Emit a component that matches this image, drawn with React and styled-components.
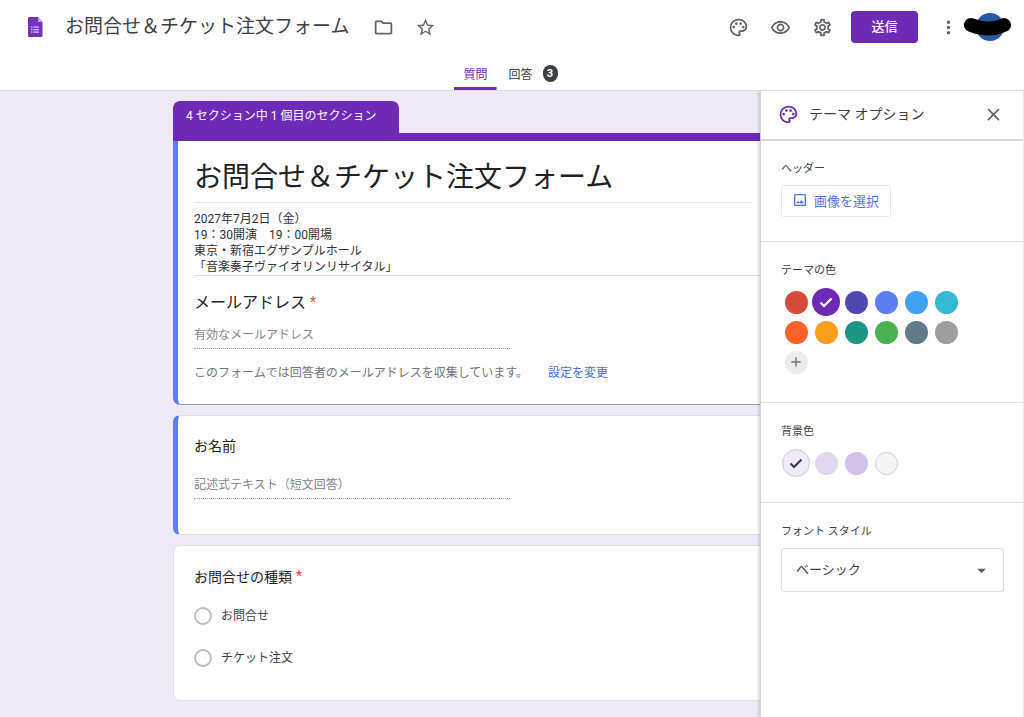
import React from "react";
import styled, { createGlobalStyle, css } from "styled-components";
import {
  MdAdd,
  MdArrowDropDown,
  MdClose,
  MdMoreVert,
  MdOutlineFolder,
  MdOutlineImage,
  MdOutlinePalette,
  MdOutlineRemoveRedEye,
  MdOutlineSettings,
  MdStarBorder,
} from "react-icons/md";

const purple = "#6f2ab5";
const blue = "#5c7ef0";
const line = "#dfdfe2";

const GlobalStyle = createGlobalStyle`
  *, *::before, *::after { box-sizing: border-box; }
  body {
    margin: 0;
    background: #fff;
    color: #202124;
    font-family: Roboto, "Noto Sans CJK JP", sans-serif;
    font-size: 12px;
  }
  button, input, select { font: inherit; color: inherit; }
  button { cursor: pointer; }
  h1, h2, h3, p, fieldset { margin: 0; padding: 0; border: 0; font-weight: 400; }
`;

const Page = styled.div`
  min-height: 100vh;
  display: flex;
  flex-direction: column;
`;

const TopBar = styled.header`
  border-bottom: 1px solid ${line};
`;

const Toolbar = styled.div`
  display: flex;
  align-items: center;
  height: 54px;
  padding: 0 12px 0 28px;
`;

const DocTitle = styled.h1`
  margin: 0 13px 0 22px;
  font-size: 19px;
  line-height: 28px;
  color: #3c4043;
  white-space: nowrap;
`;

const Spacer = styled.div`
  flex: 1;
`;

const IconButton = styled.button`
  display: flex;
  align-items: center;
  justify-content: center;
  width: ${(p) => p.$width || 42}px;
  height: 42px;
  padding: 0;
  border: 0;
  background: none;
  color: #5f6368;
  font-size: 21px;
`;

const SendButton = styled.button`
  width: 67px;
  height: 32px;
  margin: 0 15px 0 8px;
  padding: 0 0 3px;
  border: 0;
  border-radius: 4px;
  background: ${purple};
  color: #fff;
  font-size: 13px;
  font-weight: 500;
`;

const AvatarButton = styled.button`
  display: flex;
  padding: 0;
  border: 0;
  background: none;
`;

const Tabs = styled.nav`
  display: flex;
  justify-content: center;
  height: 36px;
  padding-top: 3px;
`;

const Tab = styled.button`
  display: flex;
  align-items: center;
  gap: 10px;
  padding: 2px ${(p) => (p.$active ? 9 : 12)}px 0;
  border: 0;
  background: none;
  color: #3c4043;
  border-bottom: 3px solid transparent;
  ${(p) =>
    p.$active &&
    css`
      color: ${purple};
      background: linear-gradient(${purple}, ${purple}) bottom / 100% 3px no-repeat border-box;
      border-radius: 2px 2px 0 0;
    `}
`;

const Badge = styled.span`
  width: 15px;
  height: 17px;
  border-radius: 8px;
  background: #3c4043;
  color: #fff;
  font-size: 11px;
  font-weight: 700;
  line-height: 17px;
  text-align: center;
`;

const Workspace = styled.div`
  position: relative;
  flex: 1;
  background: #f0eaf8;
`;

const FormColumn = styled.main`
  display: flex;
  flex-direction: column;
  gap: 10px;
  max-width: 678px;
  margin: 0 auto;
  padding: 10px 0 16px;
`;

const SectionTab = styled.div`
  width: fit-content;
  min-width: 226px;
  height: 32px;
  padding: 0 13px;
  border-radius: 7px 7px 0 0;
  background: ${purple};
  color: #fff;
  font-size: 12px;
  line-height: 30px;
`;

const Card = styled.section`
  overflow: hidden;
  padding: ${(p) => p.$padding};
  border: 1px solid ${line};
  border-left: ${(p) => (p.$marked ? `5px solid ${blue}` : `1px solid ${line}`)};
  border-radius: 7px;
  background: #fff;
`;

const HeadCard = styled(Card)`
  border-top: 0;
  border-bottom-color: #a09ea8;
  border-radius: 0 0 7px 7px;
`;

const SectionBar = styled.div`
  height: 8px;
  background: ${purple};
`;

const FormTitle = styled.h2`
  width: 558px;
  max-width: 100%;
  height: 49px;
  border-bottom: 1px solid #e6e6e8;
  font-size: 28px;
  line-height: 48px;
`;

const Description = styled.p`
  padding-top: 8px;
  margin-bottom: 14px;
  border-bottom: 1px solid ${line};
  color: #303134;
  font-size: 12px;
  line-height: 16px;
  white-space: pre-line;
`;

const Question = styled.label`
  display: block;
  font-size: ${(p) => (p.$large ? 16 : 14)}px;
  line-height: 24px;
`;

const Required = styled.span`
  margin-left: 4px;
  color: #d9483b;
  vertical-align: 1px;
  font-size: 14px;
`;

const Answer = styled.input`
  display: block;
  width: 316px;
  height: 28px;
  margin-top: ${(p) => p.$top}px;
  padding: 0;
  border: 0;
  border-bottom: 1px dotted #9a9da1;
  border-radius: 0;
  background: none;
  font-size: 12px;
  &::placeholder { color: #80868b; opacity: 1; }
`;

const Note = styled.p`
  display: flex;
  gap: 20px;
  margin-top: 14px;
  color: #70757a;
  font-size: 12px;
  line-height: 20px;
`;

const Link = styled.a`
  color: #3f6fe0;
  text-decoration: none;
`;

const Options = styled.fieldset`
  display: flex;
  flex-direction: column;
  gap: 22px;
  margin-top: 17px;
  min-width: 0;
`;

const Option = styled.label`
  display: flex;
  align-items: center;
  gap: 9px;
  line-height: 20px;
  color: #3c4043;
`;

const Radio = styled.input`
  appearance: none;
  width: 18px;
  height: 18px;
  margin: 0;
  border: 2px solid #bdbdbd;
  border-radius: 50%;
`;

/* The theme panel slides over the right side of the form. */
const Panel = styled.aside`
  position: absolute;
  top: 0;
  right: 0;
  bottom: 0;
  width: 264px;
  border-left: 1px solid #d5d3da;
  border-right: 1px solid #ececee;
  background: #fff;
  box-shadow: -1px 0 4px rgba(0, 0, 0, 0.2);
  clip-path: inset(0 0 0 -8px);
`;

const PanelHeader = styled.div`
  display: flex;
  align-items: center;
  height: 50px;
  padding: 0 9px 2px 17px;
  border-bottom: 2px solid #d8d8da;
  color: ${purple};
`;

const PanelTitle = styled.h2`
  flex: 1;
  margin-left: 10px;
  color: #3c4043;
  font-size: 14px;
  line-height: 20px;
`;

const PanelSection = styled.section`
  height: ${(p) => p.$height}px;
  padding: ${(p) => p.$top || 19}px 19px 0 20px;
  border-bottom: ${(p) => (p.$last ? 0 : 1)}px solid ${line};
`;

const PanelLabel = styled.h3`
  display: block;
  margin-bottom: 6px;
  color: #3c4043;
  font-size: 11px;
  line-height: 20px;
`;

const ImageButton = styled.button`
  display: flex;
  align-items: center;
  gap: 6px;
  height: 32px;
  padding: 0 11px 2px 10px;
  border: 1px solid #e6e7ea;
  border-radius: 3px;
  background: #fff;
  color: #5272e4;
  font-size: 13px;
`;

const Swatches = styled.div`
  display: grid;
  grid-template-columns: repeat(6, 30px);
  grid-auto-rows: 30px;
  place-items: center;
`;

const Swatch = styled.button`
  display: flex;
  align-items: center;
  justify-content: center;
  width: ${(p) => (p.$selected ? 28 : 23)}px;
  height: ${(p) => (p.$selected ? 28 : 23)}px;
  padding: 0;
  border: ${(p) => (p.$outlined ? "1px solid #cfcdd3" : 0)};
  border-radius: 50%;
  background: ${(p) => p.$color};
  color: ${(p) => p.$ink || "#fff"};
  font-size: 16px;
`;

const SelectBox = styled.div`
  display: grid;
  align-items: center;
  height: 44px;
  border: 1px solid ${line};
  border-radius: 3px;
  color: #5f6368;

  select, svg { grid-area: 1 / 1; }
  svg { justify-self: end; margin-right: 11px; pointer-events: none; }
`;

const FontSelect = styled.select`
  appearance: none;
  width: 100%;
  height: 100%;
  padding: 0 32px 2px 14px;
  border: 0;
  background: none;
  color: #3c4043;
  font-size: 13px;
`;

const themeColors = [
  ["赤", "#d54c3b"],
  ["紫", purple],
  ["藍", "#4f48b1"],
  ["青", "#5c7df2"],
  ["水色", "#41a2f3"],
  ["シアン", "#35b9d3"],
  ["朱", "#fc632b"],
  ["橙", "#fa9f1c"],
  ["青緑", "#1d9585"],
  ["緑", "#49b152"],
  ["青灰", "#617b8b"],
  ["灰", "#9e9e9e"],
];

const backgrounds = [
  ["薄紫", "#f0eaf8"],
  ["淡い紫", "#e1d7ef"],
  ["中間の紫", "#d3c2e8"],
  ["白灰", "#f5f5f5"],
];

function CheckMark() {
  return (
    <svg width="16" height="16" viewBox="0 0 16 16" aria-hidden="true">
      <path d="M2.500 8.500L6 12L13.500 4.500" fill="none" stroke="currentColor" strokeWidth="2.200" />
    </svg>
  );
}

function FormIcon() {
  return (
    <svg width="15" height="20" viewBox="0 0 15 20" aria-hidden="true">
      <path d="M1.500 0H10l4.500 5v13.500a1.500 1.500 0 0 1-1.500 1.500H1.500A1.500 1.500 0 0 1 0 18.500v-17A1.500 1.500 0 0 1 1.500 0z" fill="#7432b9" />
      <path d="M10 0l4.500 5H11a1 1 0 0 1-1-1z" fill="#bda0df" />
      <path d="M3 9.500h1.500v1.200H3zM5.500 9.500H11v1.200H5.500zM3 12h1.500v1.200H3zM5.500 12H11v1.200H5.500zM3 14.500h1.500v1.200H3zM5.500 14.500H11v1.200H5.500z" fill="#dccbf0" />
    </svg>
  );
}

function Avatar() {
  return (
    <svg width="49" height="30" viewBox="0 0 49 30" aria-hidden="true">
      <circle cx="27" cy="15" r="14" fill="#2a57a2" />
      <path d="M8 13Q26 20 41 13" fill="none" stroke="#000" strokeWidth="14" strokeLinecap="round" />
    </svg>
  );
}

export default function App() {
  return (
    <Page>
      <GlobalStyle />
      <TopBar>
        <Toolbar>
          <FormIcon />
          <DocTitle>お問合せ＆チケット注文フォーム</DocTitle>
          <IconButton aria-label="フォルダに移動"><MdOutlineFolder /></IconButton>
          <IconButton aria-label="スターを付ける"><MdStarBorder /></IconButton>
          <Spacer />
          <IconButton aria-label="テーマをカスタマイズ"><MdOutlinePalette /></IconButton>
          <IconButton aria-label="プレビュー"><MdOutlineRemoveRedEye /></IconButton>
          <IconButton aria-label="設定"><MdOutlineSettings /></IconButton>
          <SendButton>送信</SendButton>
          <IconButton $width={30} aria-label="その他"><MdMoreVert /></IconButton>
          <AvatarButton aria-label="アカウント"><Avatar /></AvatarButton>
        </Toolbar>
        <Tabs>
          <Tab $active>質問</Tab>
          <Tab>
            回答<Badge>3</Badge>
          </Tab>
        </Tabs>
      </TopBar>

      <Workspace>
        <FormColumn>
          <div>
            <SectionTab>4 セクション中 1 個目のセクション</SectionTab>
            <SectionBar />
            <HeadCard $marked $padding="13px 0 21px 16px">
              <FormTitle>お問合せ＆チケット注文フォーム</FormTitle>
              <Description>
                {"2027年7月2日（金）\n19：30開演　19：00開場\n東京・新宿エグザンプルホール\n「音楽奏子ヴァイオリンリサイタル」"}
              </Description>
              <Question $large htmlFor="email">
                メールアドレス<Required>*</Required>
              </Question>
              <Answer id="email" type="email" placeholder="有効なメールアドレス" $top={6} />
              <Note>
                このフォームでは回答者のメールアドレスを収集しています。
                <Link href="#settings">設定を変更</Link>
              </Note>
            </HeadCard>
          </div>

          <Card $marked $padding="18px 16px 35px">
            <Question htmlFor="name">お名前</Question>
            <Answer id="name" type="text" placeholder="記述式テキスト（短文回答）" $top={13} />
          </Card>

          <Card $padding="18px 20px 32px">
            <Question as="h3" id="kind">
              お問合せの種類<Required>*</Required>
            </Question>
            <Options aria-labelledby="kind">
              <Option><Radio type="radio" name="kind" />お問合せ</Option>
              <Option><Radio type="radio" name="kind" />チケット注文</Option>
            </Options>
          </Card>
        </FormColumn>

        <Panel>
          <PanelHeader>
            <MdOutlinePalette size={21} />
            <PanelTitle>テーマ オプション</PanelTitle>
            <IconButton aria-label="閉じる"><MdClose /></IconButton>
          </PanelHeader>
          <PanelSection $height={101} $top={18}>
            <PanelLabel>ヘッダー</PanelLabel>
            <ImageButton><MdOutlineImage size={16} />画像を選択</ImageButton>
          </PanelSection>
          <PanelSection $height={161}>
            <PanelLabel>テーマの色</PanelLabel>
            <Swatches>
              {themeColors.map(([name, color]) => (
                <Swatch key={name} aria-label={name} $color={color} $selected={color === purple}>
                  {color === purple && <CheckMark />}
                </Swatch>
              ))}
              <Swatch aria-label="色を追加" $color="#ececec" $ink="#6a6d70"><MdAdd /></Swatch>
            </Swatches>
          </PanelSection>
          <PanelSection $height={100}>
            <PanelLabel>背景色</PanelLabel>
            <Swatches>
              {backgrounds.map(([name, color], i) => (
                <Swatch
                  key={name}
                  aria-label={name}
                  $color={color}
                  $ink="#3c4043"
                  $selected={i === 0}
                  $outlined={i === 0 || i === 3}
                >
                  {i === 0 && <CheckMark />}
                </Swatch>
              ))}
            </Swatches>
          </PanelSection>
          <PanelSection $height={120} $last>
            <PanelLabel as="label" htmlFor="font-style">フォント スタイル</PanelLabel>
            <SelectBox>
              <FontSelect id="font-style" defaultValue="basic">
                <option value="basic">ベーシック</option>
              </FontSelect>
              <MdArrowDropDown size={21} />
            </SelectBox>
          </PanelSection>
        </Panel>
      </Workspace>
    </Page>
  );
}
